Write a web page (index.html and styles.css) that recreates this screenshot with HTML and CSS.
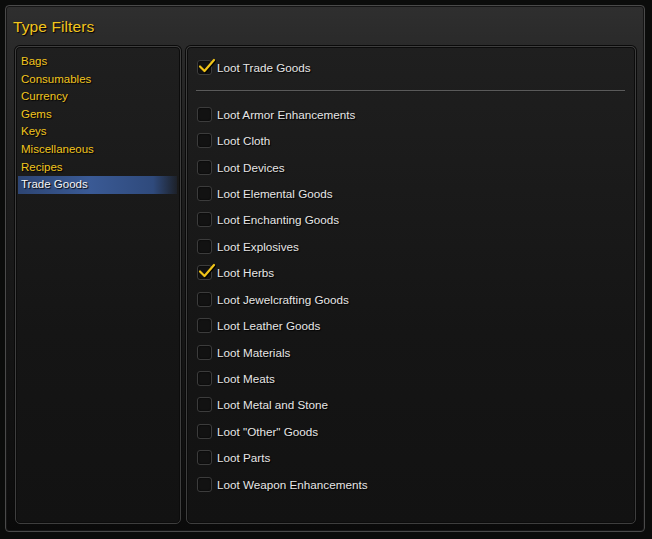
FILE: index.html
```html
<!DOCTYPE html>
<html>
<head>
<meta charset="utf-8">
<link rel="stylesheet" href="styles.css">
</head>
<body>
<div class="frame">
  <div class="title">Type Filters</div>
  <div class="panels">
    <div class="panel left">
      <ul class="cats">
        <li>Bags</li>
        <li>Consumables</li>
        <li>Currency</li>
        <li>Gems</li>
        <li>Keys</li>
        <li>Miscellaneous</li>
        <li>Recipes</li>
        <li class="sel">Trade Goods</li>
      </ul>
    </div>
    <div class="panel right">
      <div class="row head"><span class="box on"><svg class="tick" viewBox="0 0 18 16"><path d="M2 8.5 L6.5 13 L16 2" /></svg></span>Loot Trade Goods</div>
      <div class="sep"></div>
      <div class="list">
        <div class="row"><span class="box"></span>Loot Armor Enhancements</div>
        <div class="row"><span class="box"></span>Loot Cloth</div>
        <div class="row"><span class="box"></span>Loot Devices</div>
        <div class="row"><span class="box"></span>Loot Elemental Goods</div>
        <div class="row"><span class="box"></span>Loot Enchanting Goods</div>
        <div class="row"><span class="box"></span>Loot Explosives</div>
        <div class="row"><span class="box on"><svg class="tick" viewBox="0 0 18 16"><path d="M2 8.5 L6.5 13 L16 2" /></svg></span>Loot Herbs</div>
        <div class="row"><span class="box"></span>Loot Jewelcrafting Goods</div>
        <div class="row"><span class="box"></span>Loot Leather Goods</div>
        <div class="row"><span class="box"></span>Loot Materials</div>
        <div class="row"><span class="box"></span>Loot Meats</div>
        <div class="row"><span class="box"></span>Loot Metal and Stone</div>
        <div class="row"><span class="box"></span>Loot "Other" Goods</div>
        <div class="row"><span class="box"></span>Loot Parts</div>
        <div class="row"><span class="box"></span>Loot Weapon Enhancements</div>
      </div>
    </div>
  </div>
</div>
</body>
</html>
```

FILE: styles.css
```css
html, body {
  margin: 0;
  padding: 0;
  background: #0b0c0b;
  width: 652px;
  height: 539px;
  overflow: hidden;
  font-family: "Liberation Sans", Arial, sans-serif;
}
.frame {
  margin: 5px 0 0 5px;
  width: 621px;
  height: 518px;
  border: 1px solid #4a4a4a;
  border-radius: 4px;
  background: linear-gradient(#2f2f2f 0px, #2a2a2a 40px, #1c1c1c 200px, #0e0e0e 480px, #0a0a0a 100%);
  box-shadow: inset 0 0 0 1px #151515;
  display: flex;
  flex-direction: column;
  padding: 0 8px 7px 9px;
  box-sizing: content-box;
}
.title {
  color: #f2c51e;
  font-size: 15.5px;
  height: 40px;
  line-height: 22px;
  box-sizing: border-box;
  padding-top: 10px;
  margin-left: -2px;
  text-shadow: 1px 1px 1px #000;
  letter-spacing: 0.1px;
}
.panels {
  flex: 1;
  display: flex;
  gap: 5px;
}
.panel {
  border: 1px solid #3e3e3e;
  border-radius: 5px;
  background: linear-gradient(#1f1f1f, #151515 60%, #121212);
  box-shadow: inset 0 0 0 1px #0c0c0c, 0 0 0 1px #0a0a0a;
}
.left {
  width: 159px;
  padding: 6px 3px 0 2px;
}
.right {
  flex: 1;
  padding: 7px 10px 0 9px;
}
.cats {
  list-style: none;
  margin: 0;
  padding: 0;
}
.cats li {
  height: 17.6px;
  line-height: 17.6px;
  font-size: 11.5px;
  color: #f2c51e;
  padding-left: 3px;
  text-shadow: 1px 1px 1px #000;
}
.cats li.sel {
  color: #f4f4f4;
  background: linear-gradient(90deg, #2d4573 0%, #3a5a95 45%, #2f4a7c 85%, rgba(40, 60, 100, 0.2) 100%);
}
.row {
  height: 26.43px;
  display: flex;
  align-items: center;
  font-size: 11.7px;
  color: #e6e6e6;
  letter-spacing: 0px;
  text-shadow: 1px 1px 1px #000;
}
.box {
  position: relative;
  width: 13px;
  height: 13px;
  border: 1px solid #3c3c3c;
  border-radius: 3px;
  background: #121212;
  box-shadow: inset 0 0 2px #000;
  margin: 0 5px 0 1px;
  flex: none;
}
.tick {
  position: absolute;
  left: 0px;
  top: -3px;
  width: 18px;
  height: 16px;
  fill: none;
  stroke: #f0c419;
  stroke-width: 2.2px;
  stroke-linecap: round;
  stroke-linejoin: round;
  filter: drop-shadow(1px 1px 0 #000);
}
.head {
  height: 26px;
}
.sep {
  height: 1px;
  background: #5a5a5a;
  border-bottom: 1px solid #1a1a1a;
  margin: 10px 0 9px 0;
}
.list {
  display: flex;
  flex-direction: column;
}
```
